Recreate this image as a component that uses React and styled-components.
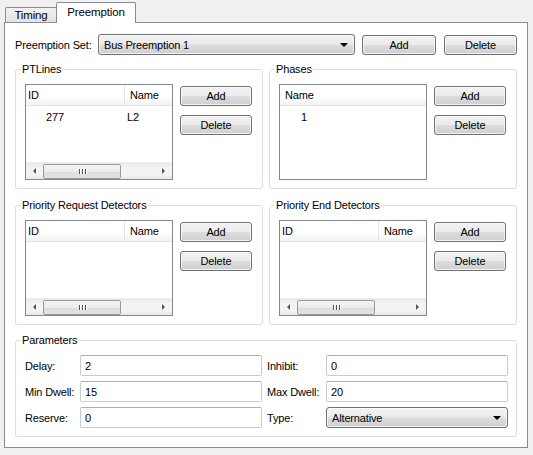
import React from "react";
import styled, { createGlobalStyle } from "styled-components";

const Global = createGlobalStyle`
  html, body { margin: 0; padding: 0; background: #f0f0f0; }
  body { font-family: "Liberation Sans", Arial, sans-serif; font-size: 11px; color: #000; letter-spacing: -0.15px; }
  * { box-sizing: border-box; }
`;

const Root = styled.div`
  width: 533px;
  height: 455px;
  padding: 2px 6px 0 4px;
  background: #f0f0f0;
`;

const TabStrip = styled.div`
  display: flex;
  align-items: flex-end;
  height: 20px;
  padding-left: 1px;
`;

const Tab = styled.div`
  position: relative;
  display: flex;
  align-items: center;
  justify-content: center;
  border: 1px solid #898c95;
  border-bottom: none;
  border-radius: 2px 2px 0 0;
  width: ${(p) => p.$w}px;
  height: ${(p) => (p.$active ? 21 : 15)}px;
  margin-bottom: ${(p) => (p.$active ? -1 : 0)}px;
  margin-left: ${(p) => (p.$active ? -1 : 0)}px;
  padding-bottom: ${(p) => (p.$active ? 3 : 0)}px;
  background: ${(p) =>
    p.$active ? "#ffffff" : "linear-gradient(#f2f2f2, #e3e3e3)"};
  z-index: ${(p) => (p.$active ? 1 : 0)};
  font-size: 11.5px;
`;

const Pane = styled.div`
  width: 524px;
  height: 426px;
  border: 1px solid #898c95;
  background: #ffffff;
  padding: 11px 10px 0 10px;
  display: flex;
  flex-direction: column;
`;

const TopRow = styled.div`
  display: flex;
  align-items: center;
  height: 21px;
`;

const SetLabel = styled.span`
  width: 83px;
  padding-left: 0;
`;

const buttonFace = `
  border: 1px solid #707070;
  border-radius: 3px;
  background: linear-gradient(#f2f2f2 0%, #ebebeb 48%, #dddddd 52%, #cfcfcf 100%);
  box-shadow: inset 0 0 0 1px rgba(255,255,255,0.7);
`;

const Combo = styled.div`
  ${buttonFace}
  width: ${(p) => p.$w}px;
  height: ${(p) => p.$h || 21}px;
  display: flex;
  align-items: center;
  justify-content: space-between;
  padding: 0 5px 0 5px;
`;

const Arrow = styled.span`
  width: 0;
  height: 0;
  border-left: 4px solid transparent;
  border-right: 4px solid transparent;
  border-top: 4px solid #000;
  margin-right: 1px;
`;

const Button = styled.div`
  ${buttonFace}
  width: ${(p) => p.$w}px;
  height: ${(p) => p.$h || 20}px;
  margin-left: ${(p) => p.$ml || 0}px;
  display: flex;
  align-items: center;
  justify-content: center;
`;

const GroupRow = styled.div`
  display: flex;
  gap: 6px;
  margin-top: ${(p) => p.$mt}px;
`;

const Group = styled.fieldset`
  margin: 0;
  min-width: 0;
  width: ${(p) => p.$w}px;
  border: 1px solid #d5dfe5;
  border-radius: 3px;
  padding: 8px 10px 8px 9px;
  margin-top: ${(p) => p.$mt || 0}px;
`;

const Legend = styled.legend`
  padding: 0 1px;
  margin-left: -4px;
  line-height: 14px;
`;

const GroupBody = styled.div`
  display: flex;
  gap: 7px;
`;

const ListView = styled.div`
  width: 148px;
  height: 96px;
  border: 1px solid #828790;
  background: #fff;
  display: flex;
  flex-direction: column;
`;

const Header = styled.div`
  display: flex;
  height: 21px;
  background: linear-gradient(#ffffff 0%, #ffffff 60%, #f2f3f5 100%);
  border-bottom: 1px solid #e5e5e5;
  flex: none;
`;

const HeadCell = styled.div`
  display: flex;
  align-items: center;
  width: ${(p) => (p.$w ? `${p.$w}px` : "auto")};
  flex: ${(p) => (p.$w ? "none" : "1")};
  padding-left: ${(p) => p.$pl}px;
  border-right: ${(p) => (p.$div ? "1px solid #e5e5e5" : "none")};
`;

const Rows = styled.div`
  flex: 1;
  padding-top: 2px;
`;

const Row = styled.div`
  display: flex;
  height: 17px;
  align-items: center;
`;

const Cell = styled.div`
  width: ${(p) => (p.$w ? `${p.$w}px` : "auto")};
  flex: ${(p) => (p.$w ? "none" : "1")};
  padding-left: ${(p) => p.$pl}px;
`;

const HScroll = styled.div`
  height: 17px;
  flex: none;
  display: flex;
  align-items: center;
  background: linear-gradient(#e8e8e8, #f3f3f3 30%, #f3f3f3 70%, #e8e8e8);
  border-top: 1px solid #ededed;
`;

const ScrollArrow = styled.div`
  width: 17px;
  height: 16px;
  display: flex;
  align-items: center;
  justify-content: center;
  &::before {
    content: "";
    border-top: 3px solid transparent;
    border-bottom: 3px solid transparent;
    ${(p) =>
      p.$dir === "left"
        ? "border-right: 3px solid #555;"
        : "border-left: 3px solid #555;"}
  }
`;

const Thumb = styled.div`
  width: 78px;
  height: 15px;
  border: 1px solid #9a9a9a;
  border-radius: 2px;
  background: linear-gradient(#f6f6f6, #ececec 50%, #dedede 52%, #e2e2e2);
  display: flex;
  align-items: center;
  justify-content: center;
`;

const Grip = styled.span`
  width: 1px;
  height: 5px;
  background: #555;
  box-shadow: 1px 0 0 #fff;
  margin: 0 1px;
`;

const Spacer = styled.div`
  flex: 1;
`;

const Buttons = styled.div`
  display: flex;
  flex-direction: column;
  gap: 9px;
  padding-top: 2px;
`;

const ParamGrid = styled.div`
  display: grid;
  grid-template-columns: 55px 182px 64px 182px;
  grid-auto-rows: 21px;
  row-gap: 5px;
  align-items: center;
`;

const ParamLabel = styled.span`
  padding-left: ${(p) => p.$pl || 0}px;
`;

const Input = styled.div`
  height: 21px;
  border: 1px solid #c6cbd1;
  border-top-color: #abadb3;
  border-radius: 2px;
  background: #fff;
  display: flex;
  align-items: center;
  padding-left: 4px;
`;

function ListBox({ columns, rows, scroll }) {
  return (
    <ListView>
      <Header>
        {columns.map((c, i) => (
          <HeadCell key={i} $w={c.w} $pl={c.pl} $div={c.div}>
            {c.label}
          </HeadCell>
        ))}
      </Header>
      <Rows>
        {rows.map((r, i) => (
          <Row key={i}>
            {r.map((v, j) => (
              <Cell key={j} $w={columns[j].w} $pl={columns[j].rpl}>
                {v}
              </Cell>
            ))}
          </Row>
        ))}
      </Rows>
      {scroll && (
        <HScroll>
          <ScrollArrow $dir="left" />
          <Thumb>
            <Grip />
            <Grip />
            <Grip />
          </Thumb>
          <Spacer />
          <ScrollArrow $dir="right" />
        </HScroll>
      )}
    </ListView>
  );
}

const idName = [
  { label: "ID", w: 99, pl: 2, rpl: 20, div: true },
  { label: "Name", pl: 5, rpl: 2 },
];
const nameOnly = [{ label: "Name", pl: 5, rpl: 21 }];

function ListGroup({ title, columns, rows, scroll }) {
  return (
    <Group $w={248}>
      <Legend>{title}</Legend>
      <GroupBody>
        <ListBox columns={columns} rows={rows} scroll={scroll} />
        <Buttons>
          <Button $w={72}>Add</Button>
          <Button $w={72}>Delete</Button>
        </Buttons>
      </GroupBody>
    </Group>
  );
}

export default function App() {
  return (
    <Root>
      <Global />
      <TabStrip>
        <Tab $w={52}>Timing</Tab>
        <Tab $w={80} $active>
          Preemption
        </Tab>
      </TabStrip>
      <Pane>
        <TopRow>
          <SetLabel>Preemption Set:</SetLabel>
          <Combo $w={257}>
            <span>Bus Preemption 1</span>
            <Arrow />
          </Combo>
          <Button $w={74} $ml={7}>
            Add
          </Button>
          <Button $w={73} $ml={8}>
            Delete
          </Button>
        </TopRow>
        <GroupRow $mt={7}>
          <ListGroup
            title="PTLines"
            columns={idName}
            rows={[["277", "L2"]]}
            scroll
          />
          <ListGroup title="Phases" columns={nameOnly} rows={[["1"]]} />
        </GroupRow>
        <GroupRow $mt={9}>
          <ListGroup
            title="Priority Request Detectors"
            columns={idName}
            rows={[]}
            scroll
          />
          <ListGroup
            title="Priority End Detectors"
            columns={idName}
            rows={[]}
            scroll
          />
        </GroupRow>
        <Group $w={502} $mt={8}>
          <Legend>Parameters</Legend>
          <ParamGrid>
            <ParamLabel>Delay:</ParamLabel>
            <Input>2</Input>
            <ParamLabel $pl={5}>Inhibit:</ParamLabel>
            <Input>0</Input>
            <ParamLabel>Min Dwell:</ParamLabel>
            <Input>15</Input>
            <ParamLabel $pl={5}>Max Dwell:</ParamLabel>
            <Input>20</Input>
            <ParamLabel>Reserve:</ParamLabel>
            <Input>0</Input>
            <ParamLabel $pl={5}>Type:</ParamLabel>
            <Combo $w={182} $h={21}>
              <span>Alternative</span>
              <Arrow />
            </Combo>
          </ParamGrid>
        </Group>
      </Pane>
    </Root>
  );
}
